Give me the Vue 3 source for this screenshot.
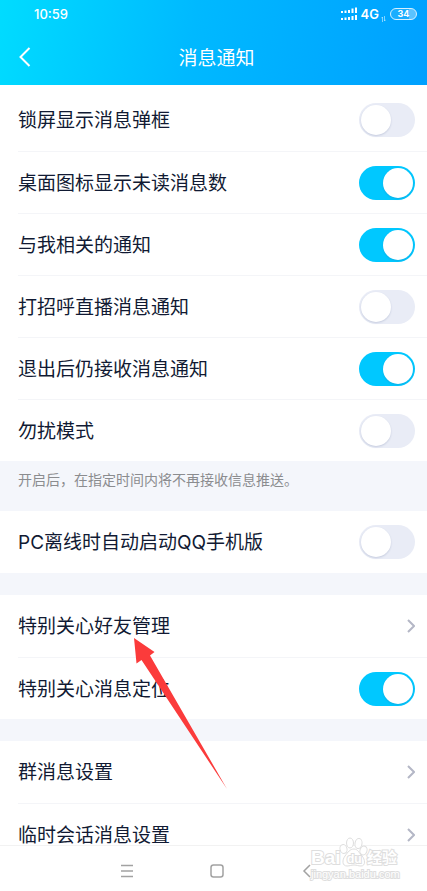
<template>
  <div class="screen">
    <header class="header">
      <div class="status">
        <span class="time">10:59</span>
        <div class="status-icons">
          <svg class="signal" viewBox="0 0 17 14" aria-hidden="true">
            <path d="M1 4h2v2H1zM4.500 3.500h2V6h-2zM8 3h2v3H8zM11.500 1.500h2V6h-2zM15 .5h2V6h-2zM1 11h2v2H1zM4.500 10.500h2V13h-2zM8 10h2v3H8zM11.500 9h2v4h-2zM15 8h2v5h-2z" />
          </svg>
          <span class="network">4G</span>
          <svg class="data" viewBox="0 0 5 6" aria-hidden="true">
            <path d="M1.500 6V1L.3 2.300M3.500 0v5l1.200-1.300" />
          </svg>
          <span class="battery">34</span>
        </div>
      </div>
      <div class="title-bar">
        <button class="back" type="button" aria-label="返回">
          <svg viewBox="0 0 12 20"><path d="M10.500 1 1.500 10l9 9" /></svg>
        </button>
        <h1 class="title">消息通知</h1>
      </div>
    </header>

    <main class="content">
      <template v-for="group in groups" :key="group.id">
        <section class="group">
          <template v-for="item in group.items" :key="item.label">
            <label v-if="item.type === 'switch'" class="row">
              <span class="label">{{ item.label }}</span>
              <input v-model="item.on" class="switch" type="checkbox" role="switch" />
            </label>
            <a v-else class="row" href="#">
              <span class="label">{{ item.label }}</span>
              <svg class="chevron" viewBox="0 0 8 14" aria-hidden="true"><path d="m1 1 6 6-6 6" /></svg>
            </a>
          </template>
        </section>
        <p v-if="group.note" class="note">{{ group.note }}</p>
      </template>
    </main>

    <nav class="nav">
      <button class="nav-button" type="button" aria-label="菜单">
        <svg viewBox="0 0 14 14"><path d="M1 1.500h12M1 7h12M1 12.500h12" /></svg>
      </button>
      <button class="nav-button" type="button" aria-label="主页">
        <svg viewBox="0 0 14 14"><rect x="1" y="1" width="12" height="12" rx="2.500" /></svg>
      </button>
      <button class="nav-button" type="button" aria-label="后退">
        <svg viewBox="0 0 14 14"><path d="M10 1 4 7l6 6" /></svg>
      </button>
    </nav>

    <svg class="pointer" viewBox="0 0 94 151" aria-hidden="true">
      <path d="M1 0 21.500 14 17 17.500 94 151 8.500 22 3.500 25.500z" />
    </svg>

    <svg class="watermark" viewBox="0 0 96 46" aria-hidden="true">
      <ellipse cx="34.500" cy="13" rx="3.500" ry="4.500" transform="rotate(-15 34.500 13)" />
      <ellipse cx="41" cy="7" rx="3.500" ry="5" />
      <ellipse cx="49.500" cy="7.500" rx="3.500" ry="5" transform="rotate(10 49.500 7.500)" />
      <ellipse cx="54.500" cy="14.500" rx="3.500" ry="4.500" transform="rotate(18 54.500 14.500)" />
      <path d="M45 13c4 0 5 4 8 7s4 10-1 10c-3 0-4-1-7-1s-4 1-7 1c-5 0-5-6-2-10s5-7 9-7z" />
      <text class="wm-brand" x="2" y="28">Bai</text>
      <text class="wm-du" x="38" y="27">du</text>
      <text class="wm-cn" x="58" y="27">经验</text>
      <text class="wm-url" x="2" y="42">jingyan.baidu.com</text>
    </svg>
  </div>
</template>

<script setup>
import { ref } from 'vue'

const groups = ref([
  {
    id: 'general',
    note: '开启后，在指定时间内将不再接收信息推送。',
    items: [
      { type: 'switch', label: '锁屏显示消息弹框', on: false },
      { type: 'switch', label: '桌面图标显示未读消息数', on: true },
      { type: 'switch', label: '与我相关的通知', on: true },
      { type: 'switch', label: '打招呼直播消息通知', on: false },
      { type: 'switch', label: '退出后仍接收消息通知', on: true },
      { type: 'switch', label: '勿扰模式', on: false },
    ],
  },
  {
    id: 'pc',
    items: [{ type: 'switch', label: 'PC离线时自动启动QQ手机版', on: false }],
  },
  {
    id: 'care',
    items: [
      { type: 'link', label: '特别关心好友管理' },
      { type: 'switch', label: '特别关心消息定位', on: true },
    ],
  },
  {
    id: 'chat',
    items: [
      { type: 'link', label: '群消息设置' },
      { type: 'link', label: '临时会话消息设置' },
    ],
  },
])
</script>

<style>
body {
  background: #fff;
}
</style>

<style scoped>
.screen {
  position: relative;
  display: flex;
  flex-direction: column;
  height: 100vh;
  overflow: hidden;
  background: #fff;
  color: #111a33;
  font-family: Inter, "Noto Sans CJK SC", sans-serif;
}

button {
  padding: 0;
  border: 0;
  background: none;
}

svg {
  display: block;
  fill: none;
}

.header {
  flex: none;
  background: linear-gradient(100deg, #00dcff 0%, #00b9ff 45%, #00a0ff 100%);
  color: #fff;
}

.status {
  display: flex;
  align-items: center;
  justify-content: space-between;
  height: 28px;
  padding: 0 10px 0 34px;
}

.time {
  font-size: 13px;
  font-weight: 500;
}

.status-icons {
  display: flex;
  align-items: center;
  gap: 4px;
}

.signal {
  width: 17px;
  height: 14px;
  fill: #fff;
}

.network {
  font-size: 13px;
  font-weight: 600;
}

.data {
  align-self: flex-end;
  width: 5px;
  height: 6px;
  margin-left: -2px;
  stroke: rgba(255, 255, 255, 0.5);
}

.battery {
  box-sizing: border-box;
  width: 27px;
  height: 12px;
  border: 1px solid #d5f0ff;
  border-radius: 6px;
  background: linear-gradient(90deg, rgba(255, 255, 255, 0.1) 70%, rgba(255, 255, 255, 0.35) 70%);
  font-size: 9px;
  font-weight: 700;
  line-height: 10px;
  text-align: center;
}

.title-bar {
  display: grid;
  grid-template-columns: 60px 1fr 54px;
  align-items: center;
  height: 57px;
}

.back {
  padding-left: 19px;
}

.back svg {
  width: 12px;
  height: 20px;
  stroke: #fff;
  stroke-width: 2;
}

.title {
  margin: 0;
  padding-top: 4px;
  font-size: 19px;
  font-weight: 400;
  line-height: 28px;
  text-align: center;
}

.content {
  flex: 1;
  min-height: 0;
  padding-top: 4px;
  overflow: auto;
  scrollbar-width: none;
}

.row {
  display: flex;
  align-items: center;
  justify-content: space-between;
  box-sizing: border-box;
  height: 62px;
  margin-left: 18px;
  padding-right: 12px;
  color: inherit;
  text-decoration: none;
}

.row + .row {
  border-top: 1px solid #f4f5f8;
}

.label {
  padding-top: 2px;
  font-size: 19px;
  line-height: 28px;
}

.group + .group {
  border-top: 22px solid #f4f6fb;
}

.note {
  box-sizing: border-box;
  min-height: 50px;
  margin: 0;
  padding: 9px 18px;
  background: #f4f6fb;
  color: #8b8c8f;
  font-size: 14px;
  line-height: 20px;
}

.switch {
  flex: none;
  width: 56px;
  height: 34px;
  margin: 0;
  padding: 2px;
  border-radius: 17px;
  background: #e9ecf6;
  appearance: none;
}

.switch::before {
  display: block;
  width: 30px;
  height: 30px;
  border-radius: 50%;
  background: #fff;
  box-shadow: 0 1px 2px rgba(60, 80, 130, 0.2);
  content: "";
}

.switch:checked {
  background: #00c8ff;
}

.switch:checked::before {
  margin-left: 22px;
}

.chevron {
  width: 8px;
  height: 14px;
  stroke: #b4b7c6;
  stroke-width: 2;
}

.nav {
  display: flex;
  flex: none;
  align-items: center;
  justify-content: space-around;
  box-sizing: border-box;
  height: 46px;
  padding: 5px 75px 0 82px;
  border-top: 1px solid #f2f2f2;
}

.nav-button {
  padding: 0 12px;
}

.nav-button svg {
  width: 14px;
  height: 14px;
  stroke: #a2a2a2;
  stroke-width: 1.5;
}

.pointer {
  position: absolute;
  top: 638px;
  left: 133px;
  width: 94px;
  height: 151px;
  fill: #fb3b3b;
}

.watermark {
  position: absolute;
  right: 22px;
  bottom: 9px;
  width: 96px;
  height: 46px;
  fill: #fff;
  stroke: #dedede;
  stroke-width: 1;
  font-family: "Liberation Sans", "Noto Sans CJK SC", sans-serif;
  pointer-events: none;
}

.watermark text {
  stroke-width: 2;
  paint-order: stroke;
}

.wm-brand {
  font-size: 19px;
  font-weight: 700;
}

.wm-du {
  font-size: 12px;
  font-weight: 700;
}

.wm-cn {
  font-size: 15px;
  font-weight: 700;
}

.wm-url {
  font-size: 11px;
}
</style>
